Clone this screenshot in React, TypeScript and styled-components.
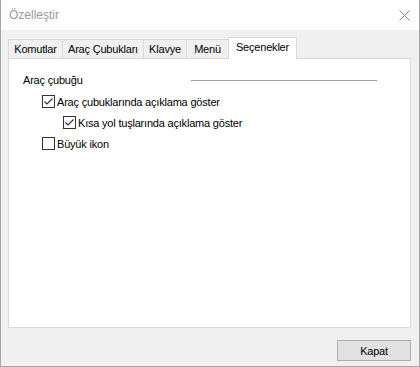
import React from "react";
import styled, { createGlobalStyle } from "styled-components";

const GlobalStyle = createGlobalStyle`
  html, body { margin: 0; padding: 0; background: #ffffff; }
  body { font-family: "Liberation Sans", Arial, sans-serif; }
  * { box-sizing: border-box; }
`;

const Window = styled.div`
  width: 420px;
  height: 367px;
  display: flex;
  flex-direction: column;
  border-left: 1px solid #a6a6a6;
  border-right: 1px solid #a6a6a6;
  border-bottom: 1px solid #a6a6a6;
  background: #f0f0f0;
  font-family: "Liberation Sans", Arial, sans-serif;
  font-size: 11px;
  letter-spacing: -0.2px;
  color: #000;
`;

const TitleBar = styled.div`
  height: 30px;
  flex: none;
  display: flex;
  align-items: center;
  justify-content: space-between;
  background: #ffffff;
  padding: 0 9px 0 8px;
`;

const Title = styled.span`
  font-size: 12px;
  letter-spacing: 0;
  color: #9a9a9a;
  line-height: 16px;
`;

const CloseButton = styled.div`
  width: 11px;
  height: 11px;
  display: flex;
  align-items: center;
  justify-content: center;
  margin-top: 1px;
`;

const Client = styled.div`
  flex: 1;
  display: flex;
  flex-direction: column;
  padding: 7px 8px 5px 7px;
`;

const TabStrip = styled.div`
  height: 21px;
  display: flex;
  align-items: flex-end;
  flex: none;
`;

const Tab = styled.div<{ $w: number; $active?: boolean }>`
  width: ${(p) => p.$w}px;
  height: ${(p) => (p.$active ? 22 : 19)}px;
  margin-bottom: ${(p) => (p.$active ? -1 : 0)}px;
  margin-left: -1px;
  &:first-child { margin-left: 0; }
  position: relative;
  z-index: ${(p) => (p.$active ? 2 : 1)};
  border: 1px solid #d9d9d9;
  border-bottom: none;
  background: ${(p) => (p.$active ? "#ffffff" : "#f0f0f0")};
  display: flex;
  align-items: center;
  justify-content: center;
  padding-bottom: ${(p) => (p.$active ? 3 : 1)}px;
  line-height: 14px;
  white-space: nowrap;
`;

const Panel = styled.div`
  flex: 1;
  background: #ffffff;
  border: 1px solid #d9d9d9;
  padding: 13px 33px 0 14px;
`;

const GroupHeader = styled.div`
  height: 16px;
  display: flex;
  align-items: center;
  line-height: 16px;
`;

const Rule = styled.div`
  width: 186px;
  height: 1px;
  margin-left: auto;
  background: #a0a0a0;
`;

const Options = styled.div`
  margin-top: 3px;
  display: flex;
  flex-direction: column;
`;

const OptionRow = styled.label<{ $indent: number }>`
  height: 21px;
  display: flex;
  align-items: center;
  padding-left: ${(p) => p.$indent}px;
  gap: 2px;
  line-height: 14px;
  white-space: nowrap;
`;

const Box = styled.span`
  width: 13px;
  height: 13px;
  flex: none;
  border: 1px solid #333333;
  background: #ffffff;
  display: flex;
  align-items: center;
  justify-content: center;
`;

const Footer = styled.div`
  flex: none;
  display: flex;
  justify-content: flex-end;
  margin-top: 12px;
`;

const Button = styled.button`
  width: 74px;
  height: 21px;
  padding: 0;
  border: 1px solid #adadad;
  background: #e1e1e1;
  font-family: "Liberation Sans", Arial, sans-serif;
  font-size: 11px;
  letter-spacing: -0.2px;
  color: #000;
  line-height: 14px;
`;

const Check: React.FC<{ checked?: boolean }> = ({ checked }) => (
  <Box>
    {checked && (
      <svg width="11" height="11" viewBox="0 0 11 11">
        <polyline
          points="1.5,5.5 4,8 9.5,2.5"
          fill="none"
          stroke="#333333"
          strokeWidth="1.2"
        />
      </svg>
    )}
  </Box>
);

const tabs = [
  { label: "Komutlar", w: 55 },
  { label: "Araç Çubukları", w: 82 },
  { label: "Klavye", w: 44 },
  { label: "Menü", w: 43 },
  { label: "Seçenekler", w: 69, active: true },
];

const options = [
  { label: "Araç çubuklarında açıklama göster", indent: 19, checked: true },
  { label: "Kısa yol tuşlarında açıklama göster", indent: 40, checked: true },
  { label: "Büyük ikon", indent: 19, checked: false },
];

export default function App() {
  return (
    <>
      <GlobalStyle />
      <Window>
        <TitleBar>
          <Title>Özelleştir</Title>
          <CloseButton>
            <svg width="11" height="11" viewBox="0 0 11 11">
              <path d="M0.5 0.5 L10.5 10.5 M10.5 0.5 L0.5 10.5" stroke="#8a8a8a" strokeWidth="1" fill="none" />
            </svg>
          </CloseButton>
        </TitleBar>
        <Client>
          <TabStrip>
            {tabs.map((t) => (
              <Tab key={t.label} $w={t.w} $active={t.active}>
                {t.label}
              </Tab>
            ))}
          </TabStrip>
          <Panel>
            <GroupHeader>
              <span>Araç çubuğu</span>
              <Rule />
            </GroupHeader>
            <Options>
              {options.map((o) => (
                <OptionRow key={o.label} $indent={o.indent}>
                  <Check checked={o.checked} />
                  <span>{o.label}</span>
                </OptionRow>
              ))}
            </Options>
          </Panel>
          <Footer>
            <Button>Kapat</Button>
          </Footer>
        </Client>
      </Window>
    </>
  );
}
